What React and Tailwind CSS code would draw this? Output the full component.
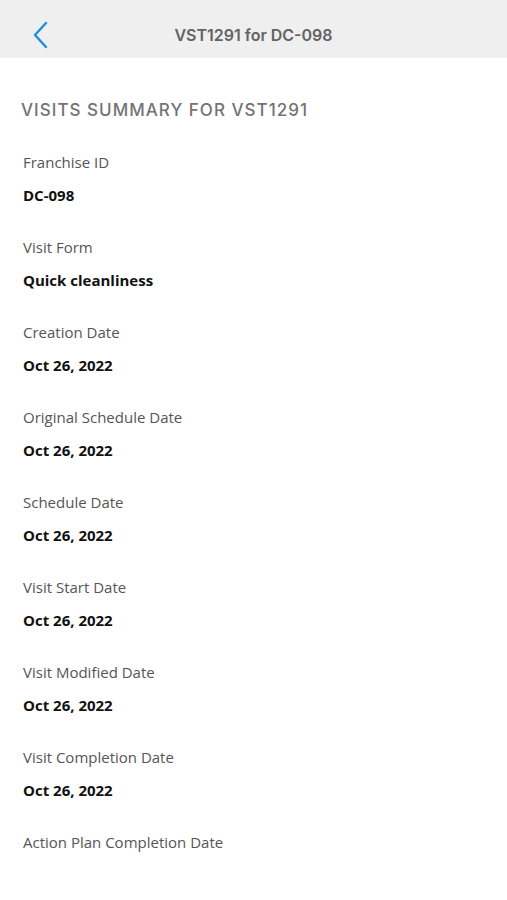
import React from 'react';

const rows = [
  { label: 'Franchise ID', value: 'DC-098' },
  { label: 'Visit Form', value: 'Quick cleanliness' },
  { label: 'Creation Date', value: 'Oct 26, 2022' },
  { label: 'Original Schedule Date', value: 'Oct 26, 2022' },
  { label: 'Schedule Date', value: 'Oct 26, 2022' },
  { label: 'Visit Start Date', value: 'Oct 26, 2022' },
  { label: 'Visit Modified Date', value: 'Oct 26, 2022' },
  { label: 'Visit Completion Date', value: 'Oct 26, 2022' },
  { label: 'Action Plan Completion Date', value: '' },
  { label: 'Consultant', value: '' },
];

const App = () => {
  return (
    <div className="w-[507px] h-[900px] overflow-hidden bg-white font-['Open_Sans',sans-serif]">
      <header className="relative h-[58px] bg-[#efefef] flex items-center justify-center">
        <button className="absolute left-[30px] top-[20px] text-[#1a8fe0]">
          <svg width="22" height="30" viewBox="0 0 22 30" fill="none" stroke="currentColor" strokeWidth="2.4" strokeLinecap="round" strokeLinejoin="round">
            <path d="M16 3 L5 15 L16 27" />
          </svg>
        </button>
        <h1 className="text-[16px] font-semibold text-[#636363] font-['Inter',sans-serif] pt-[12px]">
          VST1291 for DC-098
        </h1>
      </header>

      <main className="px-[23px]">
        <h2 className="pt-[42px] -ml-[2px] text-[17px] font-medium tracking-[0.06em] text-[#737373] font-['Inter',sans-serif] leading-[20px]">
          VISITS SUMMARY FOR VST1291
        </h2>

        <div className="mt-[32px] flex flex-col">
          {rows.map((row) => (
            <div key={row.label} className="h-[85px]">
              <p className="text-[15px] leading-[20px] text-[#555]">{row.label}</p>
              <p className="mt-[13px] text-[15px] leading-[20px] font-bold text-[#111]">{row.value}</p>
            </div>
          ))}
        </div>
      </main>
    </div>
  );
};

export default App;
